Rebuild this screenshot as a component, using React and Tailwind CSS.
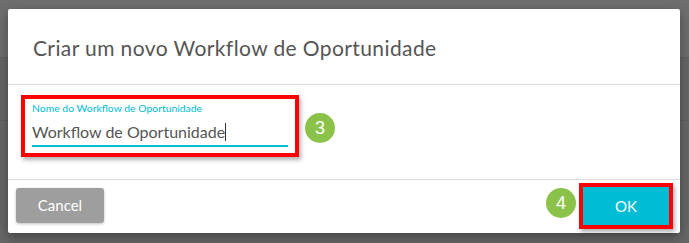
import React from "react";

const Badge = ({ n }) => (
  <div className="w-[30px] h-[30px] rounded-full bg-[#8bc34a] flex items-center justify-center text-white text-[18px] leading-none font-['Liberation_Sans',sans-serif]">
    {n}
  </div>
);

const App = () => {
  return (
    <div className="relative w-[689px] h-[243px] bg-[#666666] overflow-hidden font-['Lato',sans-serif]">
      {/* page behind the overlay */}
      <div className="absolute left-0 right-0 top-0 h-[57px] bg-[#6e6e6e]" />
      <div className="absolute left-0 right-0 top-[57px] h-px bg-[#5e5e5e]" />
      <div className="absolute left-0 right-0 top-[120px] h-px bg-[#5e5e5e]" />

      <div className="relative pt-[9px] pl-[8px]">
        <div className="w-[672px] h-[224px] bg-white rounded-[2px] shadow-[0_4px_12px_rgba(0,0,0,0.35)] flex flex-col">
          {/* header */}
          <div className="h-[76px] flex items-center pl-[25px] pt-[2px] border-b border-[#e0e0e0]">
            <h2 className="text-[21px] tracking-[0.4px] text-[#555555]">
              Criar um novo Workflow de Oportunidade
            </h2>
          </div>

          {/* body */}
          <div className="h-[95px] flex items-start pt-[10px] pl-[13px] border-b border-[#e0e0e0]">
            <div className="w-[278px] h-[62px] border-4 border-[#ff0000] px-[7px] pt-[3px] shadow-[2px_3px_4px_rgba(0,0,0,0.3)] flex flex-col">
              <label className="text-[10.4px] leading-[12px] text-[#00bcd4]">
                Nome do Workflow de Oportunidade
              </label>
              <div className="mt-[8px] h-[20px] flex items-center text-[16px] leading-[20px] text-[#555555]">
                Workflow de Oportunidade
                <span className="w-px h-[18px] bg-[#333333]" />
              </div>
              <div className="mt-[3px] h-[2px] bg-[#00bcd4]" />
            </div>
            <div className="ml-[6px] mt-[18px]">
              <Badge n="3" />
            </div>
          </div>

          {/* footer */}
          <div className="flex-1 flex items-start justify-between pl-[8px] pr-[7px]">
            <button className="mt-[8px] w-[88px] h-[35px] rounded-[3px] bg-[#9e9e9e] text-white text-[15px] shadow-[0_1px_3px_rgba(0,0,0,0.25)]">
              Cancel
            </button>
            <div className="flex items-start mt-[3px]">
              <div className="mt-[5px] mr-[3px]">
                <Badge n="4" />
              </div>
              <div className="border-4 border-[#ff0000] shadow-[2px_3px_4px_rgba(0,0,0,0.3)]">
                <button className="w-[86px] h-[38px] bg-[#00bcd4] text-white text-[15px]">
                  OK
                </button>
              </div>
            </div>
          </div>
        </div>
      </div>
    </div>
  );
};

export default App;
